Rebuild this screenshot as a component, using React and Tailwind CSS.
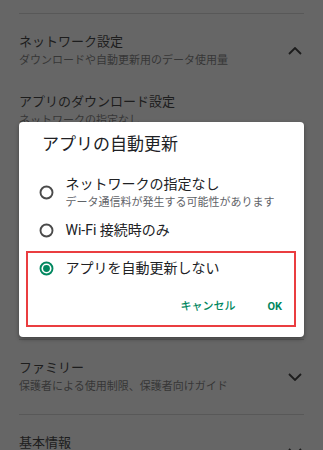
import React from "react";

// ═══════════════════ Settings list behind the dialog ═══════════════════

const font = "font-['Roboto','Noto_Sans_CJK_JP',sans-serif]";

function Chevron({ up }) {
  return (
    <svg width="14" height="8" viewBox="0 0 14 8" className="mr-[2px] shrink-0" fill="none">
      <polyline
        points={up ? "1,7 7,1 13,7" : "1,1 7,7 13,1"}
        stroke="#1c1c1c"
        strokeWidth="1.8"
        strokeLinejoin="miter"
      />
    </svg>
  );
}

function ItemText({ title, sub }) {
  return (
    <div className="flex flex-col">
      <span className="text-[13px] leading-[18px] text-[#1d1d1d]">{title}</span>
      <span className="mt-[2px] text-[11px] leading-[16px] text-[#363636]">{sub}</span>
    </div>
  );
}

function Section({ title, sub, up, children, pb = "pb-[19px]" }) {
  return (
    <div className={`border-b border-[#585858] pt-[19px] ${pb}`}>
      <div className="flex items-center justify-between">
        <ItemText title={title} sub={sub} />
        <Chevron up={up} />
      </div>
      {children}
    </div>
  );
}

// ═══════════════════ Radio ═══════════════════

function Radio({ checked }) {
  const color = checked ? "#01875f" : "#4a4a4a";
  return (
    <svg width="15" height="15" viewBox="0 0 15 15" className="-ml-[0.5px] shrink-0">
      <circle cx="7.5" cy="7.5" r="6" fill="none" stroke={color} strokeWidth="1.9" />
      {checked && <circle cx="7.5" cy="7.5" r="3.4" fill={color} />}
    </svg>
  );
}

function Option({ label, sub, checked }) {
  return (
    <div className="flex h-[38px] items-center gap-[12px] pl-[20px]">
      <Radio checked={checked} />
      <div className="flex flex-col">
        <span className="text-[14px] leading-[20px] text-[#202124]">{label}</span>
        {sub && <span className="mt-[2px] text-[11px] leading-[14px] text-[#5f6368]">{sub}</span>}
      </div>
    </div>
  );
}

export default function App() {
  return (
    <div className={`relative h-[450px] w-[323px] overflow-hidden bg-[#666666] ${font}`}>
      <div className="px-[19px]">
        <div className="h-[14px] border-b border-[#585858]" />

        <Section title="ネットワーク設定" sub="ダウンロードや自動更新用のデータ使用量" up pb="pb-[30px]">
          <div className="mt-[24px] flex flex-col gap-[24px]">
            <ItemText title="アプリのダウンロード設定" sub="ネットワークの指定なし" />
            <ItemText title="アプリの自動更新" sub="アプリを自動更新しない" />
            <ItemText title="動画の自動再生" sub="Wi-Fi 接続時のみ" />
            <ItemText title="ダウンロード時に確認" sub="アプリのサイズを確認する" />
          </div>
        </Section>

        <Section title="ファミリー" sub="保護者による使用制限、保護者向けガイド" />
        <Section title="基本情報" sub="バージョン情報" />
      </div>

      {/* dialog */}
      <div className="absolute left-[19px] top-[122px] flex h-[215px] w-[285px] flex-col rounded-[4px] bg-white shadow-[0_2px_4px_rgba(0,0,0,0.35)]">
        <div className="pl-[23px] pt-[10px] text-[17px] leading-[24px] text-[#202124]">アプリの自動更新</div>
        <div className="mt-[17px] flex flex-col">
          <Option label="ネットワークの指定なし" sub="データ通信料が発生する可能性があります" />
          <Option label="Wi-Fi 接続時のみ" />
          <Option label="アプリを自動更新しない" checked />
        </div>
        <div className="mt-[12px] flex items-center justify-end gap-[32px] pr-[22px]">
          <span className="text-[11px] font-medium leading-[16px] text-[#01875f]">キャンセル</span>
          <span className="text-[11px] font-bold leading-[16px] text-[#01875f]">OK</span>
        </div>

        {/* annotation box */}
        <div className="absolute left-[7px] top-[129px] h-[76px] w-[270px] border-2 border-[#ea3d40]" />
      </div>
    </div>
  );
}
